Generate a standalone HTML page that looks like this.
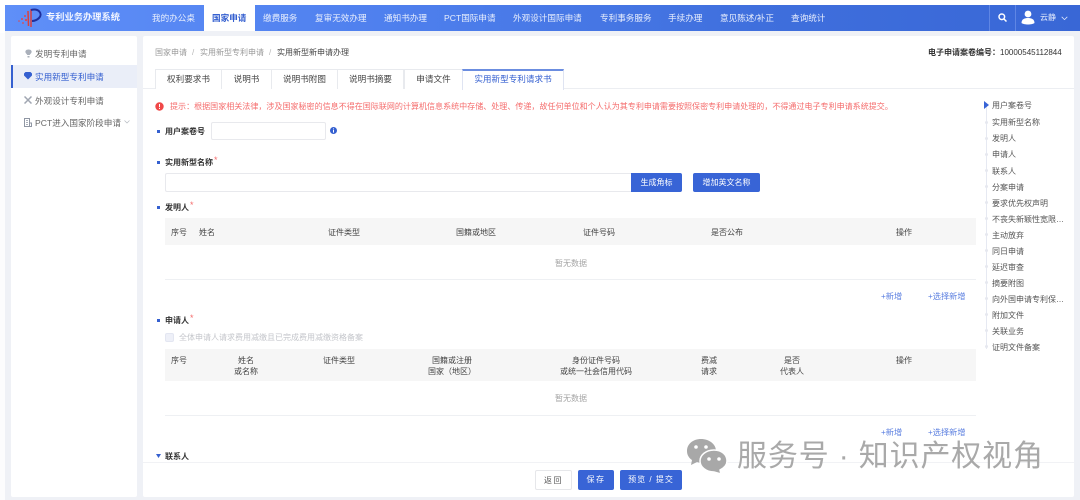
<!DOCTYPE html>
<html lang="zh">
<head>
<meta charset="utf-8">
<style>
html,body{margin:0;padding:0;background:#fff}
#p{position:relative;width:1080px;height:500px;overflow:hidden;background:#fff;font-family:"Liberation Sans","Noto Sans CJK SC",sans-serif;font-size:8px;color:#444;filter:blur(.35px)}
#p div,#p span.t{position:absolute;white-space:nowrap}
.t{line-height:12px;position:absolute;white-space:nowrap}
.n{color:#e9effd;font-size:8.6px;top:12px}
.b{font-weight:bold;color:#333}
.c{text-align:center;transform:translateX(-50%)}
.dot{width:3px;height:3px;background:#3560d0}
.s{color:#f56c6c;font-size:8px}
.tab{top:69px;height:20px;border:1px solid #e8eaee;border-bottom:none;background:#fff;text-align:center;line-height:18px;color:#444;box-sizing:border-box;font-size:8.6px}
.r{left:992px;color:#555}
.rd{left:985px;width:3px;height:3px;border-radius:50%;background:#e6e8ef}
.btn{background:#3864d6;color:#fff;text-align:center;border-radius:2px;box-sizing:border-box}
.lk{color:#5b7fe0;font-size:8.2px}
.st{color:#f56c6c;font-size:9px}
</style>
</head>
<body>
<div id="p">
  <div style="left:5px;top:31px;width:1075px;height:469px;background:#eff1f6"></div>
  <div style="left:0;top:33px;width:5px;height:467px;background:#fcfcfd"></div>

  <!-- nav -->
  <div style="left:5px;top:5px;width:1075px;height:26px;background:linear-gradient(90deg,#5f8ff8 0%,#4f80ee 35%,#3f6fdd 70%,#3967d6 100%)"></div>
  <svg style="position:absolute;left:17px;top:8px" width="26" height="20" viewBox="0 0 26 20">
    <path d="M11 3 L11.500 18 M14 1 L14 19" stroke="#d8403f" stroke-width="1.500" fill="none"/>
    <path d="M14 2 C22 0 26 6 22 10 C20 12 17 13 15 13" stroke="#1f2f9c" stroke-width="2" fill="none"/>
    <circle cx="8" cy="8" r="1" fill="#e0484a"/><circle cx="5" cy="11" r="1" fill="#e0484a"/><circle cx="9" cy="12" r="1.100" fill="#e0484a"/><circle cx="2" cy="13" r=".8" fill="#e0484a"/><circle cx="6" cy="15" r=".9" fill="#e0484a"/>
  </svg>
  <span class="t" style="left:46px;top:11px;color:#f2f5ff;font-size:9.250px;font-weight:bold">专利业务办理系统</span>
  <span class="t n" style="left:152px">我的办公桌</span>
  <div style="left:204px;top:5px;width:51px;height:26px;background:#fff"></div>
  <span class="t n" style="left:212px;color:#3560d0;font-weight:bold">国家申请</span>
  <span class="t n" style="left:263px">缴费服务</span>
  <span class="t n" style="left:315px">复审无效办理</span>
  <span class="t n" style="left:384px">通知书办理</span>
  <span class="t n" style="left:444px">PCT国际申请</span>
  <span class="t n" style="left:513px">外观设计国际申请</span>
  <span class="t n" style="left:600px">专利事务服务</span>
  <span class="t n" style="left:668px">手续办理</span>
  <span class="t n" style="left:720px">意见陈述/补正</span>
  <span class="t n" style="left:791px">查询统计</span>
  <div style="left:989px;top:5px;width:1px;height:26px;background:#5f86e4"></div>
  <div style="left:1015px;top:5px;width:1px;height:26px;background:#5f86e4"></div>
  <svg style="position:absolute;left:998px;top:13px" width="9" height="9" viewBox="0 0 9 9"><circle cx="3.800" cy="3.800" r="2.800" fill="none" stroke="#fff" stroke-width="1.500"/><path d="M6 6 L8.500 8.500" stroke="#fff" stroke-width="1.500"/></svg>
  <svg style="position:absolute;left:1021px;top:10px" width="14" height="15" viewBox="0 0 14 15"><circle cx="7" cy="4" r="3.400" fill="#fff"/><path d="M0.500 13 C0.500 9 4 8 7 8 C10 8 13.500 9 13.500 13 C11 15 3 15 0.500 13Z" fill="#fff"/></svg>
  <span class="t" style="left:1040px;top:12px;color:#e9effd">云静</span>
  <svg style="position:absolute;left:1061px;top:16px" width="7" height="5" viewBox="0 0 7 5"><path d="M.7 .8 L3.500 3.600 L6.300 .8" fill="none" stroke="#dfe7fb" stroke-width=".8"/></svg>

  <!-- sidebar -->
  <div style="left:11px;top:36px;width:126px;height:461px;background:#fff;border-radius:2px"></div>
  <div style="left:11px;top:65px;width:126px;height:23px;background:#eaeef8"></div>
  <div style="left:11px;top:65px;width:2px;height:23px;background:#3560d0"></div>
  <svg style="position:absolute;left:25px;top:49px" width="7" height="9" viewBox="0 0 7 9"><path d="M3.500 .5 C6 .5 7 2 6.500 3.500 C6 4.800 5 5 4.800 6 L2.200 6 C2 5 1 4.800 .5 3.500 C0 2 1 .5 3.500 .5Z M2.500 7 H4.500 V8.500 H2.500Z" fill="#aab0ba"/></svg>
  <span class="t" style="left:35px;top:48px;font-size:8.600px;color:#666">发明专利申请</span>
  <svg style="position:absolute;left:24px;top:72px" width="8" height="8" viewBox="0 0 8 8"><path d="M0 1.500 L1.500 0 H6.500 L8 1.500 V3.500 L4 7.500 L0 3.500Z" fill="#3560d0"/></svg>
  <span class="t" style="left:35px;top:71px;font-size:8.600px;color:#3560d0">实用新型专利申请</span>
  <svg style="position:absolute;left:24px;top:96px" width="8" height="8" viewBox="0 0 8 8"><path d="M.5 .5 L7.500 7.500 M7.500 .5 L.5 7.500" stroke="#a0a6b1" stroke-width="1.500"/></svg>
  <span class="t" style="left:35px;top:95px;font-size:8.600px;color:#666">外观设计专利申请</span>
  <svg style="position:absolute;left:24px;top:118px" width="8" height="9" viewBox="0 0 8 9"><path d="M.5 .5 H5.500 V8.500 H.5Z M5.500 5 H7.500 V8.500 H5.500Z" fill="none" stroke="#8f96a3"/><path d="M2 2.500 H4 M2 4.500 H4 M2 6.500 H4" stroke="#8f96a3" stroke-width=".8"/></svg>
  <span class="t" style="left:35px;top:117px;font-size:8.600px;color:#666">PCT进入国家阶段申请</span>
  <svg style="position:absolute;left:124px;top:120px" width="6" height="4" viewBox="0 0 6 4"><path d="M.5 .5 L3 3 L5.500 .5" fill="none" stroke="#b5b9c0" stroke-width=".7"/></svg>

  <!-- main -->
  <div style="left:143px;top:36px;width:931px;height:461px;background:#fff;border-radius:2px"></div>
  <span class="t" style="left:155px;top:47px;color:#999">国家申请</span>
  <span class="t" style="left:192px;top:47px;color:#b5b5b5">/</span>
  <span class="t" style="left:200px;top:47px;color:#999">实用新型专利申请</span>
  <span class="t" style="left:269px;top:47px;color:#b5b5b5">/</span>
  <span class="t" style="left:277px;top:47px;color:#444">实用新型新申请办理</span>
  <span class="t" style="left:928px;top:47px;color:#333;font-weight:bold">电子申请案卷编号：</span>
  <span class="t" style="left:1000px;top:47px;color:#333;font-size:8px">10000545112844</span>

  <div style="left:143px;top:88px;width:931px;height:1px;background:#eceef2"></div>
  <div class="tab" style="left:155px;width:67px">权利要求书</div>
  <div class="tab" style="left:221px;width:51px">说明书</div>
  <div class="tab" style="left:271px;width:67px">说明书附图</div>
  <div class="tab" style="left:337px;width:67px">说明书摘要</div>
  <div class="tab" style="left:404px;width:59px">申请文件</div>
  <div class="tab" style="left:462px;width:102px;color:#3560d0;border-top:2px solid #6b8de0;background:#fff;height:21px;line-height:17px;border-color:#dfe4f2;border-top-color:#6b8de0">实用新型专利请求书</div>

  <!-- hint -->
  <svg style="position:absolute;left:155px;top:102px" width="9" height="9" viewBox="0 0 9 9"><circle cx="4.500" cy="4.500" r="4.200" fill="#f04848"/><rect x="4" y="2" width="1" height="3.200" fill="#fff"/><rect x="4" y="6" width="1" height="1" fill="#fff"/></svg>
  <span class="t s" style="left:170px;top:101px;font-size:8.040px">提示：根据国家相关法律，涉及国家秘密的信息不得在国际联网的计算机信息系统中存储、处理、传递，故任何单位和个人认为其专利申请需要按照保密专利申请处理的，不得通过电子专利申请系统提交。</span>

  <!-- case no -->
  <div class="dot" style="left:157px;top:130px"></div>
  <span class="t b" style="left:165px;top:126px">用户案卷号</span>
  <div style="left:211px;top:122px;width:115px;height:18px;border:1px solid #e8e9ed;border-radius:2px;box-sizing:border-box"></div>
  <svg style="position:absolute;left:330px;top:127px" width="7" height="7" viewBox="0 0 7 7"><circle cx="3.500" cy="3.500" r="3.500" fill="#3560d0"/><rect x="3" y="3" width="1" height="2.600" fill="#fff"/><rect x="3" y="1.400" width="1" height="1" fill="#fff"/></svg>

  <!-- name -->
  <div class="dot" style="left:157px;top:161px"></div>
  <span class="t b" style="left:165px;top:157px">实用新型名称</span>
  <span class="t st" style="left:214px;top:154px">*</span>
  <div style="left:165px;top:173px;width:466px;height:19px;border:1px solid #e8e9ed;border-right:none;border-radius:2px 0 0 2px;box-sizing:border-box"></div>
  <div class="t btn" style="left:631px;top:173px;width:51px;height:19px;line-height:19px;border-radius:0 2px 2px 0">生成角标</div>
  <div class="t btn" style="left:693px;top:173px;width:67px;height:19px;line-height:19px">增加英文名称</div>

  <!-- inventor -->
  <div class="dot" style="left:157px;top:206px"></div>
  <span class="t b" style="left:165px;top:202px">发明人</span>
  <span class="t st" style="left:190px;top:199px">*</span>
  <div style="left:165px;top:218px;width:811px;height:27px;background:#f6f6f6"></div>
  <span class="t" style="left:171px;top:227px">序号</span>
  <span class="t" style="left:199px;top:227px">姓名</span>
  <span class="t" style="left:328px;top:227px">证件类型</span>
  <span class="t" style="left:456px;top:227px">国籍或地区</span>
  <span class="t" style="left:583px;top:227px">证件号码</span>
  <span class="t" style="left:711px;top:227px">是否公布</span>
  <span class="t" style="left:896px;top:227px">操作</span>
  <span class="t" style="left:555px;top:258px;color:#a5a5a5">暂无数据</span>
  <div style="left:165px;top:279px;width:811px;height:1px;background:#eef0f3"></div>
  <span class="t lk" style="left:881px;top:291px">+新增</span>
  <span class="t lk" style="left:928px;top:291px">+选择新增</span>

  <!-- applicant -->
  <div class="dot" style="left:157px;top:319px"></div>
  <span class="t b" style="left:165px;top:315px">申请人</span>
  <span class="t st" style="left:190px;top:312px">*</span>
  <div style="left:165px;top:333px;width:9px;height:9px;background:#eef0f8;border:1px solid #e3e6f1;border-radius:2px;box-sizing:border-box"></div>
  <span class="t" style="left:179px;top:332px;color:#c4c6cb">全体申请人请求费用减缴且已完成费用减缴资格备案</span>
  <div style="left:165px;top:349px;width:811px;height:32px;background:#f6f6f6"></div>
  <span class="t" style="left:171px;top:355px">序号</span>
  <span class="t c" style="left:246px;top:355px">姓名</span>
  <span class="t c" style="left:246px;top:366px">或名称</span>
  <span class="t" style="left:323px;top:355px">证件类型</span>
  <span class="t c" style="left:452px;top:355px">国籍或注册</span>
  <span class="t c" style="left:452px;top:366px">国家（地区）</span>
  <span class="t c" style="left:596px;top:355px">身份证件号码</span>
  <span class="t c" style="left:596px;top:366px">或统一社会信用代码</span>
  <span class="t c" style="left:709px;top:355px">费减</span>
  <span class="t c" style="left:709px;top:366px">请求</span>
  <span class="t c" style="left:792px;top:355px">是否</span>
  <span class="t c" style="left:792px;top:366px">代表人</span>
  <span class="t" style="left:896px;top:355px">操作</span>
  <span class="t" style="left:555px;top:393px;color:#a5a5a5">暂无数据</span>
  <div style="left:165px;top:415px;width:811px;height:1px;background:#eef0f3"></div>
  <span class="t lk" style="left:881px;top:427px">+新增</span>
  <span class="t lk" style="left:928px;top:427px">+选择新增</span>

  <!-- contact -->
  <svg style="position:absolute;left:156px;top:454px" width="5" height="4" viewBox="0 0 5 4"><path d="M0 0 H5 L2.500 4Z" fill="#3560d0"/></svg>
  <span class="t b" style="left:165px;top:451px">联系人</span>

  <!-- anchor list -->
  <div style="left:986px;top:106px;width:1px;height:243px;background:#e6e9f2"></div>
  <svg style="position:absolute;left:984px;top:101px" width="5" height="8" viewBox="0 0 5 8"><path d="M0 0 L5 4 L0 8Z" fill="#3864d6"/></svg>
  <div class="rd" style="top:121px"></div><div class="rd" style="top:137px"></div><div class="rd" style="top:153px"></div><div class="rd" style="top:169px"></div><div class="rd" style="top:185px"></div><div class="rd" style="top:201px"></div><div class="rd" style="top:217px"></div><div class="rd" style="top:233px"></div><div class="rd" style="top:249px"></div><div class="rd" style="top:265px"></div><div class="rd" style="top:281px"></div><div class="rd" style="top:297px"></div><div class="rd" style="top:313px"></div><div class="rd" style="top:329px"></div><div class="rd" style="top:345px"></div>
  <span class="t r" style="top:100px">用户案卷号</span>
  <span class="t r" style="top:117px">实用新型名称</span>
  <span class="t r" style="top:133px">发明人</span>
  <span class="t r" style="top:149px">申请人</span>
  <span class="t r" style="top:166px">联系人</span>
  <span class="t r" style="top:182px">分案申请</span>
  <span class="t r" style="top:198px">要求优先权声明</span>
  <span class="t r" style="top:214px">不丧失新颖性宽限…</span>
  <span class="t r" style="top:230px">主动放弃</span>
  <span class="t r" style="top:246px">同日申请</span>
  <span class="t r" style="top:262px">延迟审查</span>
  <span class="t r" style="top:278px">摘要附图</span>
  <span class="t r" style="top:294px">向外国申请专利保…</span>
  <span class="t r" style="top:310px">附加文件</span>
  <span class="t r" style="top:326px">关联业务</span>
  <span class="t r" style="top:342px">证明文件备案</span>

  <!-- footer -->
  <div style="left:143px;top:462px;width:931px;height:1px;background:#f1f2f5"></div>
  <div class="t" style="left:535px;top:470px;width:37px;height:20px;line-height:19px;text-align:center;border:1px solid #e6e7ea;box-sizing:border-box;border-radius:2px;letter-spacing:1.500px;color:#555">返回</div>
  <div class="t btn" style="left:578px;top:470px;width:36px;height:20px;line-height:20px;letter-spacing:1.500px">保存</div>
  <div class="t btn" style="left:620px;top:470px;width:62px;height:20px;line-height:20px;letter-spacing:1px">预览 / 提交</div>

  <!-- watermark -->
  <svg style="position:absolute;left:686px;top:438px" width="42" height="36" viewBox="0 0 42 36">
    <path d="M15 1 C7 1 1 6 1 13 C1 17 3 20 6 22 L5 27 L11 24 C13 24.500 14 25 16 25 C24 25 30 19 30 13 C30 6 23 1 15 1Z" fill="#a8a8a8"/>
    <path d="M28 12 C20 12 14 17 14 23 C14 29 20 34 28 34 L35 36 L34 32 C38 30 41 27 41 23 C41 17 36 12 28 12Z" fill="#a8a8a8" stroke="#fff" stroke-width="1.500"/>
    <circle cx="10" cy="9" r="1.800" fill="#fff"/><circle cx="20" cy="9" r="1.800" fill="#fff"/>
    <circle cx="23" cy="21" r="1.800" fill="#fff"/><circle cx="33" cy="21" r="1.800" fill="#fff"/>
  </svg>
  <span class="t" style="left:737px;top:439px;font-size:30px;line-height:36px;color:#a9a9a9;letter-spacing:.85px">服务号 · 知识产权视角</span>
</div>
</body>
</html>
